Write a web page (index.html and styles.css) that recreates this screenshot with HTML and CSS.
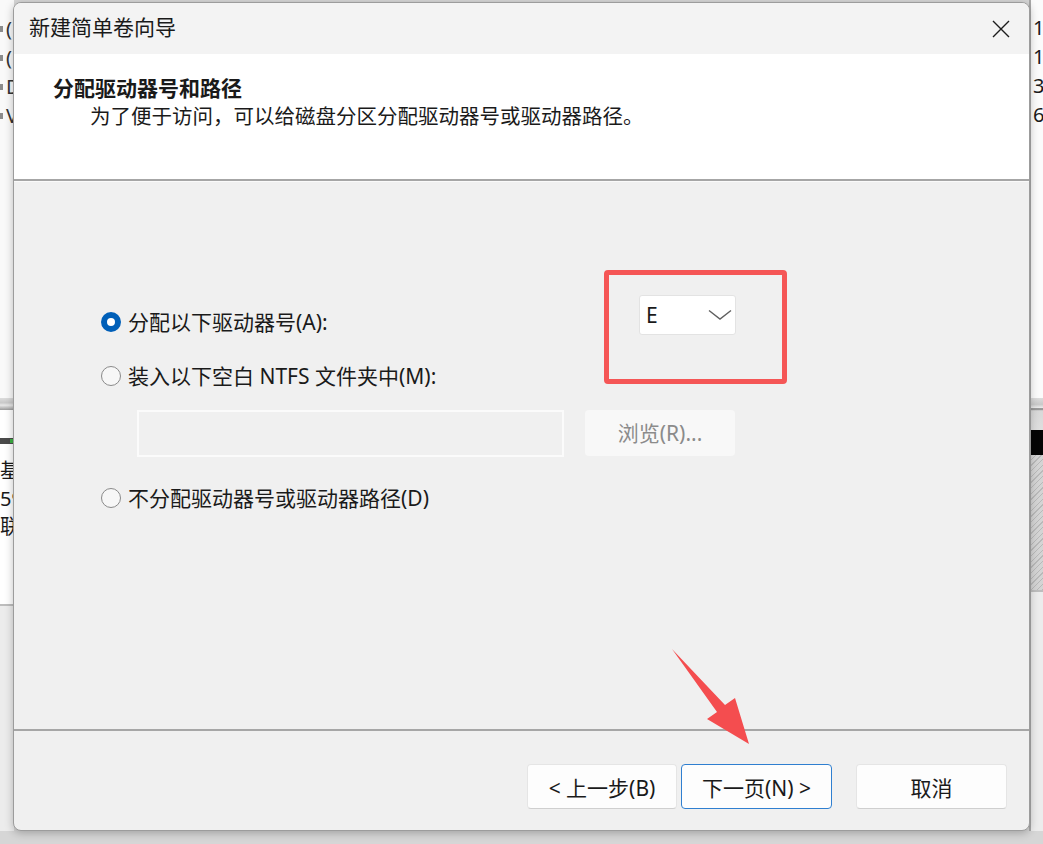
FILE: index.html
```html
<!DOCTYPE html>
<html lang="zh-CN">
<head>
  <meta charset="UTF-8">
  <title>新建简单卷向导</title>
  <link rel="stylesheet" href="styles.css">
</head>
<body>

<!-- window behind the wizard -->
<div class="bg-left">
  <div class="bg-list">
    <div class="bg-row"><i></i>(</div>
    <div class="bg-row"><i></i>(</div>
    <div class="bg-row"><i></i>D</div>
    <div class="bg-row"><i></i>V</div>
  </div>
  <div class="bg-split"></div>
  <div class="bg-disk">
    <div class="bg-bar"><b></b></div>
    <div class="bg-text">基本</div>
    <div class="bg-text">59</div>
    <div class="bg-text">联机</div>
  </div>
  <div class="bg-rest"></div>
</div>
<div class="bg-right">
  <div class="bg-list">
    <div class="bg-num">16</div>
    <div class="bg-num">16</div>
    <div class="bg-num">3</div>
    <div class="bg-num">6</div>
  </div>
  <div class="bg-split wide"></div>
  <div class="bg-black"></div>
  <div class="bg-hatch"></div>
  <div class="bg-rest"></div>
</div>

<!-- wizard dialog -->
<div class="dialog">
  <div class="titlebar">
    <span class="title">新建简单卷向导</span>
    <svg class="close" width="18" height="18" viewBox="0 0 18 18">
      <path d="M1 1 L17 17 M17 1 L1 17" stroke="#1c1c1c" stroke-width="1.4" fill="none"/>
    </svg>
  </div>

  <div class="header">
    <div class="header-title">分配驱动器号和路径</div>
    <div class="header-sub">为了便于访问，可以给磁盘分区分配驱动器号或驱动器路径。</div>
  </div>

  <div class="content">
    <div class="option-row first">
      <div class="option wide">
        <span class="radio checked"></span>
        <span>分配以下驱动器号(A):</span>
      </div>
      <div class="select">
        <span>E</span>
        <svg width="24" height="12" viewBox="0 0 24 12">
          <path d="M1 1.5 L12 10 L23 1.5" stroke="#5f5f5f" stroke-width="1.4" fill="none"/>
        </svg>
      </div>
    </div>
    <div class="option-row second">
      <div class="option">
        <span class="radio"></span>
        <span>装入以下空白 NTFS 文件夹中(M):</span>
      </div>
    </div>
    <div class="path-row">
      <div class="path-input"></div>
      <div class="browse-btn">浏览(R)...</div>
    </div>
    <div class="option-row last">
      <div class="option">
        <span class="radio"></span>
        <span>不分配驱动器号或驱动器路径(D)</span>
      </div>
    </div>
  </div>

  <div class="footer">
    <button class="btn">&lt; 上一步(B)</button>
    <button class="btn focused">下一页(N) &gt;</button>
    <button class="btn cancel">取消</button>
  </div>

  <!-- red annotations -->
  <div class="mark-box"></div>
  <svg class="mark-arrow" width="100" height="110" viewBox="0 0 100 110">
    <polygon points="8,6 61,62 71,55 85,101 43,76 53,69" fill="#f44d4f"/>
  </svg>
</div>

</body>
</html>
```

FILE: styles.css
```css
body {
  margin: 0;
  width: 1043px;
  height: 844px;
  overflow: hidden;
  background: #d6d6d6;
  font-family: "Noto Sans", "Noto Sans CJK SC", sans-serif;
  color: #1a1a1a;
  position: relative;
}

/* ---------- background window ---------- */
.bg-left, .bg-right {
  position: absolute;
  top: 0;
  height: 831px;
  display: flex;
  flex-direction: column;
  overflow: hidden;
  font-size: 20px;
  line-height: 28px;
}
.bg-left {
  left: 0;
  width: 14px;
  background: #f9f9f9;
}
.bg-right {
  right: 0;
  width: 14px;
  background: #fbfbfb;
  border-left: 2px solid #a9a9a9;
  box-sizing: border-box;
}
.bg-list {
  height: 398px;
  padding-top: 14px;
  box-sizing: border-box;
}
.bg-row {
  display: flex;
  align-items: center;
  gap: 3px;
  height: 29px;
  white-space: nowrap;
  color: #333;
}
.bg-row i {
  display: block;
  width: 3px;
  height: 6px;
  background: #8c8c8c;
  flex: none;
}
.bg-num {
  height: 29px;
  padding-left: 2px;
  white-space: nowrap;
}
.bg-split {
  height: 12px;
  background: linear-gradient(#dcdcdc, #c9c9c9 40%, #e8e8e8 60%, #9a9a9a);
}
.bg-split.wide {
  height: 32px;
  background: linear-gradient(#dcdcdc, #c9c9c9 20%, #e8e8e8 30%, #7a7a7a 34%, #d8d8d8 40%, #dedede);
}
.bg-disk {
  height: 194px;
  padding-top: 47px;
  box-sizing: border-box;
  background: #fff;
  position: relative;
}
.bg-bar {
  position: absolute;
  top: 28px;
  left: 0;
  width: 14px;
  height: 6px;
  background: #4a4a4a;
}
.bg-bar b {
  position: absolute;
  right: 1px;
  top: 1px;
  width: 3px;
  height: 4px;
  background: #3cb043;
}
.bg-text {
  white-space: nowrap;
  height: 28px;
}
.bg-rest {
  flex: 1;
  background: #ececec;
  border-top: 2px solid #bdbdbd;
}
.bg-black {
  height: 25px;
  background: #050505;
}
.bg-hatch {
  height: 135px;
  background: repeating-linear-gradient(135deg, #d4d4d4 0 3px, #b9b9b9 3px 4px);
}

/* ---------- dialog ---------- */
.dialog {
  position: absolute;
  left: 13px;
  top: 2px;
  width: 1017px;
  height: 829px;
  box-sizing: border-box;
  border: 1px solid #9c9c9c;
  border-radius: 8px;
  overflow: hidden;
  display: flex;
  flex-direction: column;
  background: #f0f0f0;
  box-shadow: 0 2px 8px rgba(0, 0, 0, 0.25);
}
.titlebar {
  height: 51px;
  flex: none;
  display: flex;
  align-items: center;
  justify-content: space-between;
  padding: 0 19px 0 15px;
  background: #f3f3f3;
}
.title {
  font-size: 21px;
  line-height: 28px;
  padding-bottom: 3px;
}
.close {
  display: block;
}
.header {
  height: 127px;
  flex: none;
  box-sizing: border-box;
  padding: 20px 0 0 39px;
  background: #fff;
  border-bottom: 2px solid #a6a6a6;
}
.header-title {
  font-size: 21px;
  font-weight: bold;
  line-height: 28px;
}
.header-sub {
  font-size: 20.5px;
  line-height: 28px;
  padding-left: 37px;
}
.content {
  flex: 1;
  box-sizing: border-box;
  border-top: 1px solid #fafafa;
  border-bottom: 2px solid #a6a6a6;
  padding: 113px 0 0 87px;
  font-size: 21px;
  line-height: 30px;
}
.option-row {
  display: flex;
  align-items: flex-start;
}
.option-row.second {
  margin-top: 24px;
}
.option-row.last {
  margin-top: 26px;
}
.option {
  display: flex;
  align-items: center;
  gap: 7px;
  white-space: nowrap;
}
.option.wide {
  width: 538px;
  margin-top: 12px;
}
.radio {
  width: 20px;
  height: 20px;
  box-sizing: border-box;
  border-radius: 50%;
  border: 1px solid #8a8a8a;
  background: #f7f7f7;
  flex: none;
}
.radio.checked {
  border: 6px solid #005fb8;
  background: #fff;
}
.select {
  width: 97px;
  height: 40px;
  box-sizing: border-box;
  background: #fff;
  border: 1px solid #e3e3e3;
  border-radius: 3px;
  display: flex;
  align-items: center;
  justify-content: space-between;
  padding: 0 2px 0 6px;
  font-size: 21px;
}
.select svg {
  display: block;
  margin-right: 1px;
}
.path-row {
  display: flex;
  gap: 21px;
  margin: 19px 0 0 36px;
}
.path-input {
  width: 427px;
  height: 47px;
  box-sizing: border-box;
  border: 2px solid #fbfbfb;
  background: #f0f0f0;
}
.browse-btn {
  width: 150px;
  height: 46px;
  box-sizing: border-box;
  background: #f8f8f8;
  border-radius: 4px;
  color: #8b8b8b;
  font-size: 21px;
  display: flex;
  align-items: center;
  justify-content: center;
}

/* ---------- footer buttons ---------- */
.footer {
  height: 99px;
  flex: none;
  box-sizing: border-box;
  display: flex;
  justify-content: flex-end;
  align-items: flex-start;
  gap: 4px;
  padding: 33px 22px 0 0;
}
.btn {
  width: 150px;
  height: 45px;
  box-sizing: border-box;
  background: #fdfdfd;
  border: 1px solid #e5e5e5;
  border-bottom-color: #cfcfcf;
  border-radius: 4px;
  font-family: inherit;
  font-size: 21px;
  color: #1a1a1a;
  padding: 0;
}
.btn.focused {
  width: 151px;
  border: 1px solid #2f7fd0;
}
.btn.cancel {
  width: 151px;
  margin-left: 20px;
}

/* ---------- annotations ---------- */
.mark-box {
  position: absolute;
  left: 590px;
  top: 267px;
  width: 183px;
  height: 114px;
  box-sizing: border-box;
  border: 5px solid #f55656;
  border-radius: 4px;
}
.mark-arrow {
  position: absolute;
  left: 650px;
  top: 640px;
}
```
